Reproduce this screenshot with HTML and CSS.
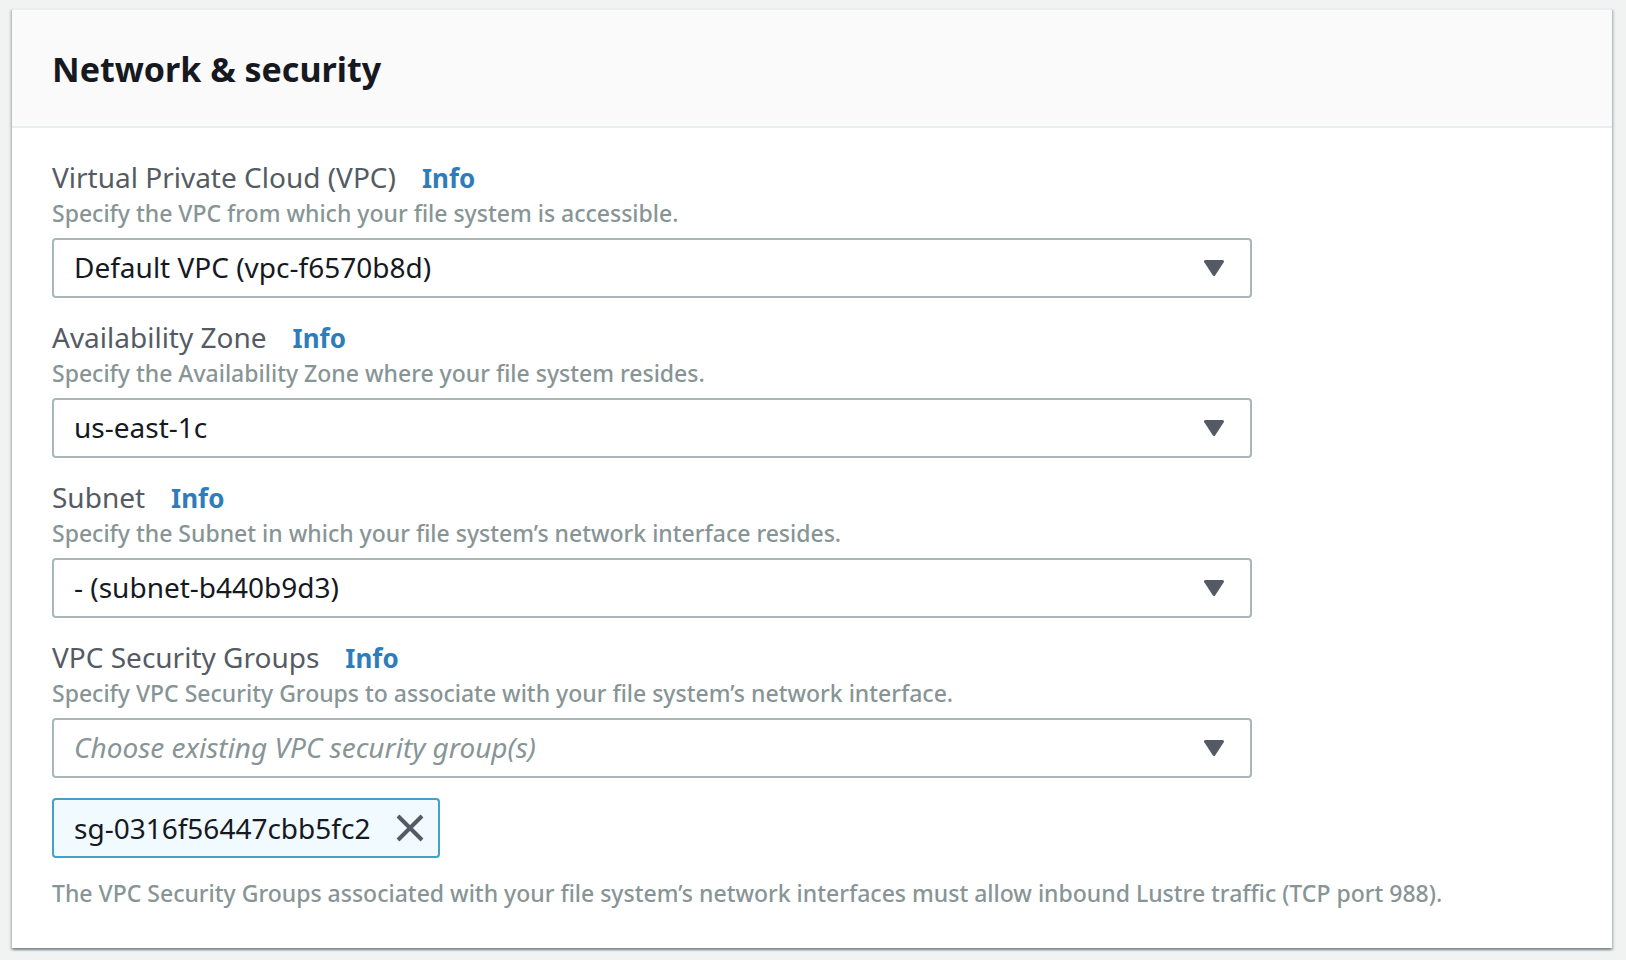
FILE: index.html
```html
<!DOCTYPE html>
<html lang="en">
<head>
<meta charset="utf-8">
<title>Network &amp; security</title>
<link rel="stylesheet" href="styles.css">
</head>
<body>
<section class="card">
  <header class="card-header">
    <h2 class="card-title">Network &amp; security</h2>
  </header>
  <form class="card-body">
    <div class="field">
      <div class="field-head">
        <label for="vpc">Virtual Private Cloud (VPC)</label>
        <a class="info" href="#">Info</a>
      </div>
      <p class="hint" id="vpc-hint">Specify the VPC from which your file system is accessible.</p>
      <div class="select-wrap">
        <select id="vpc" class="select" aria-describedby="vpc-hint"><option>Default VPC (vpc-f6570b8d)</option></select>
        <svg class="caret" viewBox="0 0 20 16" aria-hidden="true"><path d="M1.5 1.5h17L10 14.5z"/></svg>
      </div>
    </div>
    <div class="field">
      <div class="field-head">
        <label for="zone">Availability Zone</label>
        <a class="info" href="#">Info</a>
      </div>
      <p class="hint" id="zone-hint">Specify the Availability Zone where your file system resides.</p>
      <div class="select-wrap">
        <select id="zone" class="select" aria-describedby="zone-hint"><option>us-east-1c</option></select>
        <svg class="caret" viewBox="0 0 20 16" aria-hidden="true"><path d="M1.5 1.5h17L10 14.5z"/></svg>
      </div>
    </div>
    <div class="field">
      <div class="field-head">
        <label for="subnet">Subnet</label>
        <a class="info" href="#">Info</a>
      </div>
      <p class="hint" id="subnet-hint">Specify the Subnet in which your file system’s network interface resides.</p>
      <div class="select-wrap">
        <select id="subnet" class="select" aria-describedby="subnet-hint"><option>- (subnet-b440b9d3)</option></select>
        <svg class="caret" viewBox="0 0 20 16" aria-hidden="true"><path d="M1.5 1.5h17L10 14.5z"/></svg>
      </div>
    </div>
    <div class="field">
      <div class="field-head">
        <label for="groups">VPC Security Groups</label>
        <a class="info" href="#">Info</a>
      </div>
      <p class="hint" id="groups-hint">Specify VPC Security Groups to associate with your file system’s network interface.</p>
      <div class="select-wrap">
        <select id="groups" class="select select-empty" aria-describedby="groups-hint"><option>Choose existing VPC security group(s)</option></select>
        <svg class="caret" viewBox="0 0 20 16" aria-hidden="true"><path d="M1.5 1.5h17L10 14.5z"/></svg>
      </div>
      <div class="token">
        <span>sg-0316f56447cbb5fc2</span>
        <button class="token-remove" type="button" aria-label="Remove sg-0316f56447cbb5fc2">
          <svg viewBox="0 0 28 28" aria-hidden="true"><path d="M2 2l24 24M26 2L2 26"/></svg>
        </button>
      </div>
      <p class="hint note">The VPC Security Groups associated with your file system’s network interfaces must allow inbound Lustre traffic (TCP port 988).</p>
    </div>
  </form>
</section>
</body>
</html>
```
FILE: styles.css
```css
* { box-sizing: border-box; }

body {
  margin: 0;
  padding: 8px 14px 12px 12px;
  background: #f1f3f3;
  color: #16191f;
  font-family: "Noto Sans", "Open Sans", sans-serif;
  font-size: 28px;
  line-height: 36px;
}

.card {
  background: #fff;
  border-top: 2px solid #eaeded;
  box-shadow: 0 2px 2px rgba(0, 28, 36, 0.3), 2px 2px 2px rgba(0, 28, 36, 0.15), -2px 2px 2px rgba(0, 28, 36, 0.15);
}

.card-header {
  padding: 37px 40px 35px;
  background: #fafafa;
  border-bottom: 2px solid #eaeded;
}

.card-title {
  margin: 0;
  font-size: 34px;
  line-height: 44px;
  font-weight: 700;
}

.card-body {
  display: flex;
  flex-direction: column;
  gap: 21px;
  padding: 31px 40px 37px;
}

.field-head {
  display: flex;
  align-items: baseline;
  gap: 26px;
  height: 36px;
  color: #545b64;
}

.info {
  color: #2e7dba;
  font-size: 26px;
  font-weight: 700;
  text-decoration: none;
}

.hint {
  margin: 0;
  color: #879596;
  font-size: 23px;
  font-weight: 500;
  line-height: 36px;
}

.select-wrap {
  position: relative;
  max-width: 1200px;
  margin-top: 7px;
}

.select {
  display: block;
  width: 100%;
  height: 60px;
  padding: 0 80px 2px 20px;
  appearance: none;
  background: #fff;
  border: 2px solid #aab7b8;
  border-radius: 4px;
  color: #16191f;
  font: inherit;
}

.select-empty {
  color: #879596;
  font-style: italic;
}

.caret {
  position: absolute;
  top: 22px;
  right: 28px;
  width: 20px;
  height: 16px;
  fill: #545b64;
  stroke: #545b64;
  stroke-width: 3;
  stroke-linejoin: round;
  pointer-events: none;
}

.token {
  display: flex;
  align-items: center;
  gap: 26px;
  width: fit-content;
  height: 60px;
  margin-top: 20px;
  padding: 0 14px 0 20px;
  background: #f1faff;
  border: 2px solid #44a0c8;
  border-radius: 4px;
}

.token-remove {
  display: flex;
  padding: 0;
  background: none;
  border: 0;
}

.token-remove svg {
  width: 28px;
  height: 28px;
  fill: none;
  stroke: #545b64;
  stroke-width: 4;
}

.note { margin-top: 17px; }
```
